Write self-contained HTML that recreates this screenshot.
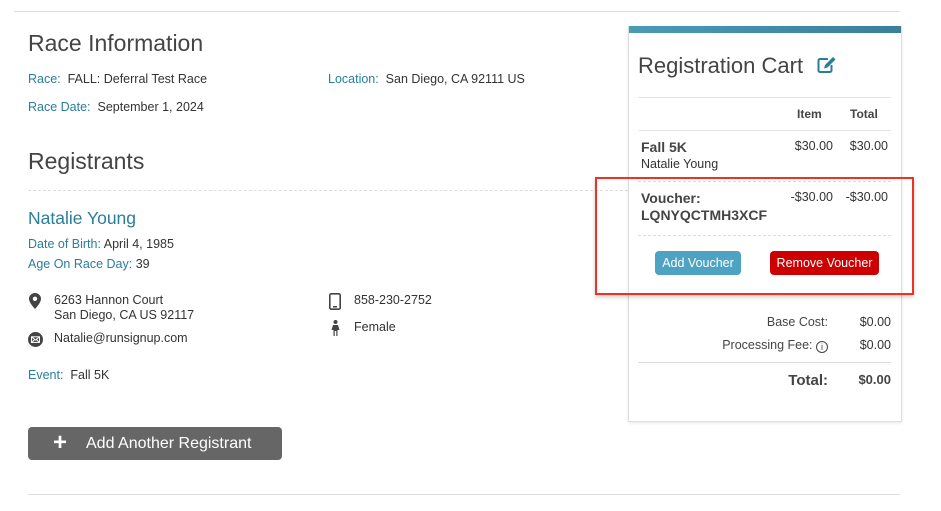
<!DOCTYPE html><html><head><style>
body{margin:0;width:941px;height:511px;background:#fff;font-family:"Liberation Sans",sans-serif;color:#333;position:relative;overflow:hidden}
.a{position:absolute;white-space:nowrap}
.l{color:#2a7d9b}
.s13{font-size:12.5px}
h{font-weight:300}
</style></head><body>
<div class="a" style="left:14px;top:11px;width:886px;border-top:1px solid #ddd"></div>
<div class="a" style="left:28px;top:30px;font-size:23px;color:#444">Race Information</div>
<div class="a s13" style="left:28px;top:72px"><span class="l">Race:</span>&nbsp; FALL: Deferral Test Race</div>
<div class="a s13" style="left:328px;top:72px"><span class="l">Location:</span>&nbsp; San Diego, CA 92111 US</div>
<div class="a s13" style="left:28px;top:100px"><span class="l">Race Date:</span>&nbsp; September 1, 2024</div>
<div class="a" style="left:28px;top:148px;font-size:23px;color:#444">Registrants</div>
<div class="a" style="left:28px;top:190px;width:600px;border-top:1px dashed #ddd"></div>
<div class="a l" style="left:28px;top:208px;font-size:17.5px">Natalie Young</div>
<div class="a s13" style="left:28px;top:237px"><span class="l">Date of Birth:</span> April 4, 1985</div>
<div class="a s13" style="left:28px;top:257px"><span class="l">Age On Race Day:</span> 39</div>
<svg class="a" style="left:29px;top:293px" width="12" height="16" viewBox="0 0 12 16"><path d="M6 0C2.7 0 0 2.6 0 5.8 0 10 6 16 6 16s6-6 6-10.2C12 2.6 9.3 0 6 0z" fill="#444"/><circle cx="6" cy="5.8" r="2.2" fill="#fff"/></svg>
<div class="a s13" style="left:54px;top:293px;line-height:14.5px">6263 Hannon Court<br>San Diego, CA US 92117</div>
<svg class="a" style="left:28px;top:332px" width="15" height="15" viewBox="0 0 15 15"><circle cx="7.5" cy="7.5" r="7.5" fill="#444"/><rect x="3.5" y="4.8" width="8" height="5.6" fill="none" stroke="#fff" stroke-width="1"/><path d="M3.5 4.8l4 3.2 4-3.2M3.5 10.4l3-2.6M11.5 10.4l-3-2.6" fill="none" stroke="#fff" stroke-width="1"/></svg>
<div class="a s13" style="left:54px;top:331px">Natalie@runsignup.com</div>
<svg class="a" style="left:329px;top:293px" width="12" height="17" viewBox="0 0 12 17"><rect x="0.8" y="0.8" width="10.4" height="15.4" rx="1.5" fill="none" stroke="#444" stroke-width="1.6"/><rect x="4" y="13" width="4" height="1.5" fill="#444"/></svg>
<div class="a s13" style="left:354px;top:293px">858-230-2752</div>
<svg class="a" style="left:331px;top:320px" width="9" height="16" viewBox="0 0 9 16"><circle cx="4.5" cy="2" r="2" fill="#444"/><path d="M2 5h5l1.5 5H6.5V16H5.3v-5H3.7v5H2.5v-6H.5z" fill="#444"/></svg>
<div class="a s13" style="left:354px;top:320px">Female</div>
<div class="a s13" style="left:28px;top:368px"><span class="l">Event:</span>&nbsp; Fall 5K</div>
<div class="a" style="left:28px;top:427px;width:254px;height:33px;background:#666;border-radius:4px;color:#fff;font-size:16px;line-height:33px"><span style="position:absolute;left:25px;top:-1px;font-size:24px;font-weight:bold">+</span><span style="position:absolute;left:58px">Add Another Registrant</span></div>
<div class="a" style="left:28px;top:494px;width:872px;border-top:1px solid #ddd"></div>

<div class="a" style="left:628px;top:26px;width:272px;height:395px;border:1px solid #ddd;border-top:none;background:#fff;box-shadow:0 1px 3px rgba(0,0,0,.1)">
<div style="height:7px;background:linear-gradient(90deg,#4a9bb6,#3a7f98)"></div>
</div>
<div class="a" style="left:638px;top:53px;font-size:22px;font-weight:300;color:#444">Registration Cart</div>
<svg class="a" style="left:817px;top:56px" width="20" height="18" viewBox="0 0 20 18"><path d="M11 3H3a1.5 1.5 0 0 0-1.5 1.5v10A1.5 1.5 0 0 0 3 16h10a1.5 1.5 0 0 0 1.5-1.5V9" fill="none" stroke="#2a7d9b" stroke-width="2"/><path d="M16 1l2.5 2.5-8 8L7 12.5l1-3.5z" fill="#2a7d9b"/></svg>
<div class="a" style="left:638px;top:97px;width:253px;border-top:1px solid #e5e5e5"></div>
<div class="a" style="left:797px;top:107px;font-size:12px;font-weight:bold;color:#444">Item</div>
<div class="a" style="left:850px;top:107px;font-size:12px;font-weight:bold;color:#444">Total</div>
<div class="a" style="left:638px;top:130px;width:253px;border-top:1px solid #e5e5e5"></div>
<div class="a" style="left:641px;top:139px;font-size:14px;font-weight:bold;color:#444">Fall 5K</div>
<div class="a s13" style="left:641px;top:157px">Natalie Young</div>
<div class="a s13" style="right:108px;top:139px">$30.00</div>
<div class="a s13" style="right:53px;top:139px">$30.00</div>
<div class="a" style="left:638px;top:181px;width:253px;border-top:1px dashed #ddd"></div>
<div class="a" style="left:641px;top:190px;font-size:14px;font-weight:bold;color:#444;line-height:17px">Voucher:<br>LQNYQCTMH3XCF</div>
<div class="a s13" style="right:108px;top:190px">-$30.00</div>
<div class="a s13" style="right:53px;top:190px">-$30.00</div>
<div class="a" style="left:638px;top:235px;width:253px;border-top:1px dashed #ddd"></div>
<div class="a" style="left:655px;top:251px;width:86px;height:24px;background:#4ea3c3;border-radius:4px;color:#fff;font-size:12.5px;line-height:24px;text-align:center">Add Voucher</div>
<div class="a" style="left:770px;top:251px;width:109px;height:24px;background:#cc0000;border-radius:4px;color:#fff;font-size:12.5px;line-height:24px;text-align:center">Remove Voucher</div>
<div class="a" style="left:595px;top:177px;width:315px;height:114px;border:2px solid #ee3322;box-shadow:0 2px 4px rgba(0,0,0,.2)"></div>
<div class="a s13" style="right:113px;top:315px;color:#444">Base Cost:</div>
<div class="a s13" style="right:50px;top:315px">$0.00</div>
<div class="a s13" style="right:113px;top:338px;color:#444">Processing Fee: <span style="display:inline-block;width:10px;height:10px;border:1px solid #444;border-radius:50%;font-size:9px;line-height:10px;text-align:center;vertical-align:-1px">i</span></div>
<div class="a s13" style="right:50px;top:338px">$0.00</div>
<div class="a" style="left:638px;top:362px;width:253px;border-top:1px solid #ddd"></div>
<div class="a" style="right:113px;top:372px;font-size:15px;font-weight:bold;color:#444">Total:</div>
<div class="a" style="right:50px;top:372px;font-size:13px;font-weight:bold;color:#444">$0.00</div>
</body></html>
